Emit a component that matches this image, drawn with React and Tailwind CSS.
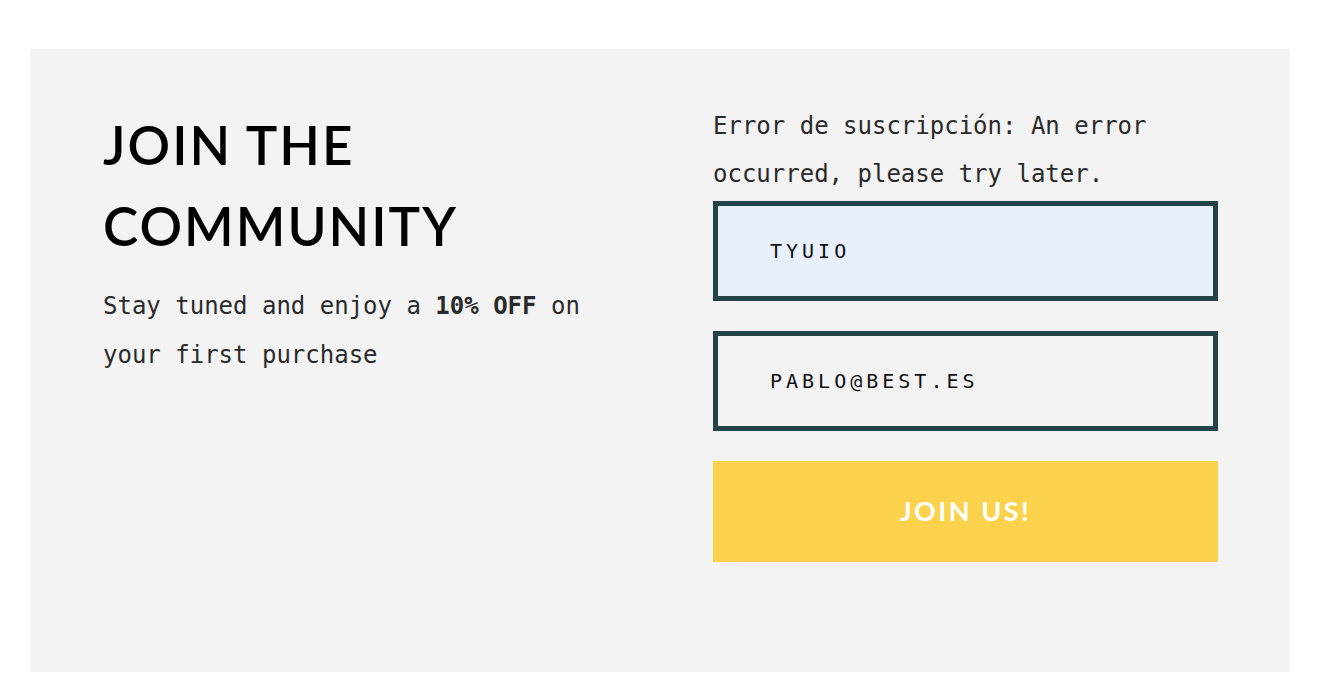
export default function App() {
  return (
    <div className="min-h-screen bg-white pt-[49px] pl-[30px]">
      <section className="w-[1260px] h-[623px] bg-[#f3f3f3] flex pt-[53px] px-[73px]">
        {/* Left: headline + pitch */}
        <div className="w-[505px] shrink-0 pt-[2px]">
          <h2 className="font-['Lato',sans-serif] font-semibold text-[53px] leading-[81px] tracking-[2px] text-black uppercase">
            Join the
            <br />
            Community
          </h2>
          <p className="mt-[16px] font-['DejaVu_Sans_Mono',monospace] text-[24px] leading-[49px] text-[#2a2a2a] w-[490px]">
            Stay tuned and enjoy a <strong className="font-bold">10% OFF</strong> on your first purchase
          </p>
        </div>

        {/* Right: subscription form */}
        <div className="ml-[105px] w-[505px] shrink-0">
          <p className="font-['DejaVu_Sans_Mono',monospace] text-[24px] leading-[48px] text-[#2a2a2a]">
            Error de suscripción: An error occurred, please try later.
          </p>
          <form className="mt-[3px] flex flex-col gap-[30px]" onSubmit={e => e.preventDefault()}>
            <input
              type="text"
              defaultValue="TYUIO"
              className="h-[100px] w-full border-[5px] border-[#234346] bg-[#e8f0fe] pl-[52px] font-['DejaVu_Sans_Mono',monospace] text-[20px] tracking-[4px] uppercase text-[#111] outline-none"
            />
            <input
              type="email"
              defaultValue="PABLO@BEST.ES"
              className="h-[100px] w-full border-[5px] border-[#234346] bg-[#f3f3f3] pl-[52px] font-['DejaVu_Sans_Mono',monospace] text-[20px] tracking-[4px] uppercase text-[#111] outline-none"
            />
            <button
              type="submit"
              className="h-[101px] w-full bg-[#fcd24c] font-['Lato',sans-serif] font-bold text-[27px] tracking-[2.5px] text-white uppercase"
            >
              Join us!
            </button>
          </form>
        </div>
      </section>
    </div>
  );
}
